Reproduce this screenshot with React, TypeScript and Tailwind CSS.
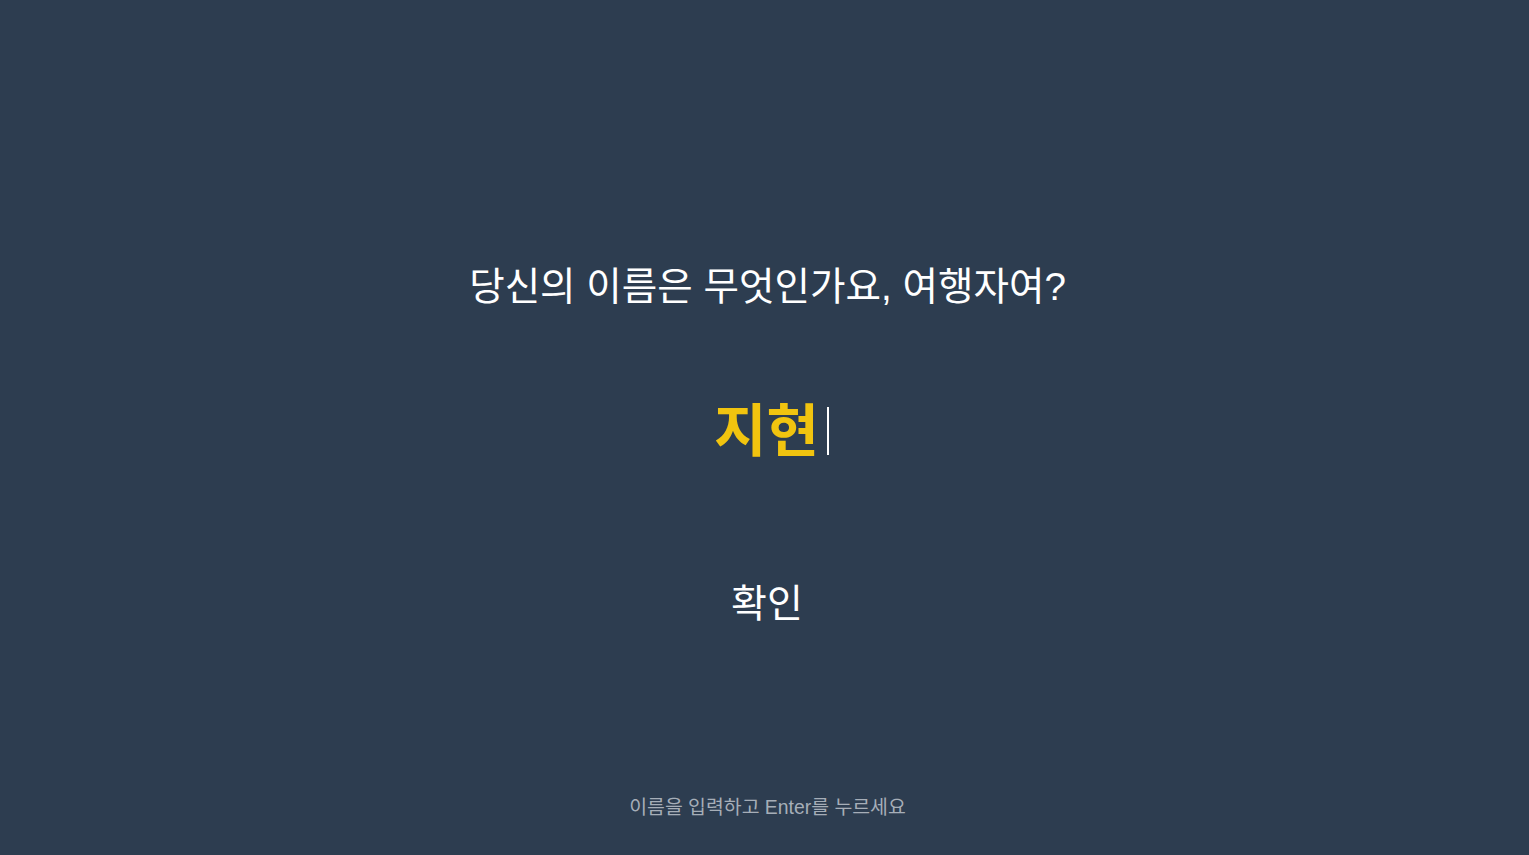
import { useState } from "react";

export default function App() {
  const [name] = useState("지현");

  return (
    <div
      className="w-full h-[855px] bg-[#2d3d50] flex flex-col items-center text-white"
      style={{ fontFamily: '"Liberation Sans", "Noto Sans CJK KR", sans-serif' }}
    >
      <h1 className="mt-[267px] ml-[6px] text-[38.6px] leading-[40px] font-normal">
        당신의 이름은 무엇인가요, 여행자여?
      </h1>

      <div className="mt-[98px] relative h-[52px] ml-[4px]">
        <span className="text-[57px] leading-[52px] font-bold text-[#f1c40f]">{name}</span>
        <span className="absolute left-full top-[2px] ml-[8px] w-[2px] h-[48px] bg-white" />
      </div>

      <button className="mt-[127px] ml-[5px] text-[39px] leading-[40px] text-white bg-transparent">
        확인
      </button>

      <p className="mt-[169px] ml-[6px] text-[19.4px] leading-[28px] text-[#a6aeb8]">
        이름을 입력하고 Enter를 누르세요
      </p>
    </div>
  );
}
